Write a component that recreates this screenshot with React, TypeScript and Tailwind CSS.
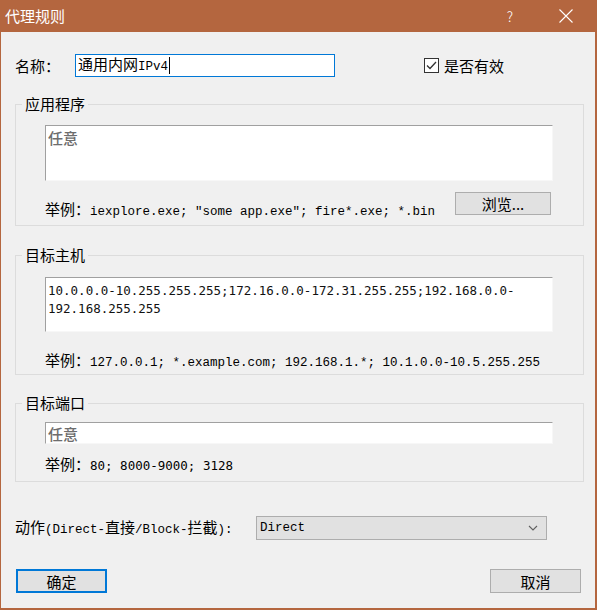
import React from 'react';

const cjk = { fontFamily: '"Noto Sans CJK SC", "Noto Sans", sans-serif' };

// latin part of NSimSun-like text: half width of the 15px CJK glyphs
function Mono({ children }: { children: React.ReactNode }) {
  return <span className="font-[family-name:Liberation_Mono,monospace] text-[12.5px]">{children}</span>;
}

function SunkenBox({ className, children }: { className: string; children?: React.ReactNode }) {
  return (
    <div className={`bg-white border-t border-l border-t-[#a0a0a0] border-l-[#a0a0a0] border-r border-b border-r-[#f7f7f7] border-b-[#f7f7f7] ${className}`}>
      {children}
    </div>
  );
}

function Group({ title, className, children }: { title: string; className: string; children: React.ReactNode }) {
  return (
    <fieldset className={`w-[569px] border border-[#dcdcdc] ${className}`}>
      <legend className="ml-[6px] px-[3px] text-[15px] leading-[14px] text-black">{title}</legend>
      {children}
    </fieldset>
  );
}

export default function App() {
  return (
    <div className="w-[597px] h-[610px] bg-[#f0f0f0] border-l border-r-2 border-b-2 border-[#b4663f] text-black" style={cjk}>
      {/* title bar */}
      <div className="h-[32px] bg-[#b4663f] flex items-center text-white">
        <span className="ml-[4px] text-[15px] leading-none pb-[1px]">代理规则</span>
        <span className="ml-auto mr-[46px] text-[14px] font-light leading-none">?</span>
        <svg width="14" height="14" viewBox="0 0 14 14" className="mr-[22px]">
          <path d="M0.5 0.5 L13.5 13.5 M13.5 0.5 L0.5 13.5" stroke="white" strokeWidth="1.1" fill="none" />
        </svg>
      </div>

      <div className="pl-[14px] pt-[22px]">
        {/* name row */}
        <div className="flex items-center h-[23px]">
          <span className="w-[60px] text-[15px] leading-none">名称：</span>
          <div className="w-[260px] h-[23px] border border-[#0078d7] bg-white flex items-center pl-[2px]">
            <span className="text-[15px] leading-[17px] whitespace-nowrap">
              通用内网<Mono>IPv4</Mono>
            </span>
            <span className="w-px h-[17px] bg-black ml-[1px]" />
          </div>
          <div className="ml-[89px] flex items-center">
            <div className="w-[15px] h-[15px] border border-[#333] bg-white flex items-center justify-center">
              <svg width="11" height="9" viewBox="0 0 11 9">
                <path d="M1 4.5 L4 7.5 L10 1" stroke="#333" strokeWidth="1.3" fill="none" />
              </svg>
            </div>
            <span className="ml-[5px] text-[15px] leading-none">是否有效</span>
          </div>
        </div>

        {/* application */}
        <Group title="应用程序" className="mt-[20px]">
          <div className="pl-[29px] pt-[14px] pb-[10px]">
            <SunkenBox className="w-[508px] h-[56px] pl-[2px] pt-[4px]">
              <div className="text-[15px] leading-[15px] text-[#6d6d6d] font-medium">任意</div>
            </SunkenBox>
            <div className="flex items-end justify-between w-[508px] mt-[11px]">
              <div className="h-[15px] text-[15px] leading-[15px] mb-[-1px] whitespace-nowrap">
                举例：<Mono>iexplore.exe; "some app.exe"; fire*.exe; *.bin</Mono>
              </div>
              <button className="w-[96px] h-[23px] mr-[2px] bg-[#e1e1e1] border border-[#adadad] text-[15px] leading-none">
                浏览...
              </button>
            </div>
          </div>
        </Group>

        {/* hosts */}
        <Group title="目标主机" className="mt-[22px]">
          <div className="pl-[29px] pt-[15px] pb-[7px]">
            <SunkenBox className="w-[508px] h-[55px] pl-[2px] pt-[4px]">
              <div className="font-[family-name:DejaVu_Sans_Mono,monospace] text-[12.5px] leading-[18px] text-[#111]">
                <div>10.0.0.0-10.255.255.255;172.16.0.0-172.31.255.255;192.168.0.0-</div>
                <div>192.168.255.255</div>
              </div>
            </SunkenBox>
            <div className="mt-[20px] h-[15px] text-[15px] leading-[15px] whitespace-nowrap">
              举例：<Mono>127.0.0.1; *.example.com; 192.168.1.*; 10.1.0.0-10.5.255.255</Mono>
            </div>
          </div>
        </Group>

        {/* ports */}
        <Group title="目标端口" className="mt-[21px]">
          <div className="pl-[29px] pt-[12px] pb-[10px]">
            <SunkenBox className="w-[508px] h-[22px] pl-[2px] flex items-center">
              <span className="text-[15px] leading-[15px] text-[#6d6d6d] font-medium">任意</span>
            </SunkenBox>
            <div className="mt-[12px] h-[15px] text-[15px] leading-[15px] whitespace-nowrap">
              举例：<span className="font-[family-name:DejaVu_Sans_Mono,monospace] text-[12.5px]">80; 8000-9000; 3128</span>
            </div>
          </div>
        </Group>

        {/* action */}
        <div className="flex items-center mt-[34px] h-[24px]">
          <span className="w-[241px] text-[15px] leading-none whitespace-nowrap">
            动作<Mono>(Direct-</Mono>直接<Mono>/Block-</Mono>拦截<Mono>):</Mono>
          </span>
          <div className="w-[291px] h-[24px] bg-[#e1e1e1] border border-[#adadad] flex items-center pl-[3px] pr-[8px]">
            <Mono>Direct</Mono>
            <svg width="10" height="6" viewBox="0 0 10 6" className="ml-auto">
              <path d="M1 1 L5 5 L9 1" stroke="#606060" strokeWidth="1.1" fill="none" />
            </svg>
          </div>
        </div>

        {/* buttons */}
        <div className="flex justify-between w-[569px] mt-[29px]">
          <button className="ml-[1px] w-[91px] h-[24px] bg-[#e1e1e1] border-2 border-[#0078d7] text-[15px] leading-none">
            确定
          </button>
          <button className="mr-[3px] w-[91px] h-[24px] bg-[#e1e1e1] border border-[#adadad] text-[15px] leading-none">
            取消
          </button>
        </div>
      </div>
    </div>
  );
}
